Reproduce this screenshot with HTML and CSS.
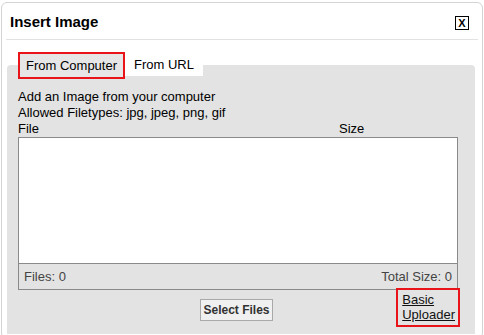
FILE: index.html
```html
<!DOCTYPE html>
<html lang="en">
<head>
  <meta charset="UTF-8" />
  <title>Insert Image</title>
  <link rel="stylesheet" href="styles.css">
</head>
<body>

  <div class="dialog">
    <div class="dialog-head">
      <span class="dialog-title">Insert Image</span>
      <button class="close-btn">X</button>
    </div>

    <div class="dialog-body">
      <div class="tabs">
        <div class="tab tab-active">From Computer</div>
        <div class="tab">From URL</div>
      </div>

      <div class="panel">
        <div class="intro">
          <div>Add an Image from your computer</div>
          <div>Allowed Filetypes: jpg, jpeg, png, gif</div>
        </div>

        <div class="list-head">
          <span class="col-file">File</span>
          <span class="col-size">Size</span>
        </div>

        <div class="file-list">
          <div class="file-rows"></div>
          <div class="file-foot">
            <span>Files: 0</span>
            <span>Total Size: 0</span>
          </div>
        </div>

        <div class="actions">
          <span></span>
          <button class="select-btn">Select Files</button>
          <a href="#" class="basic-link">Basic<br>Uploader</a>
        </div>
      </div>
    </div>
  </div>

</body>
</html>
```

FILE: styles.css
```css
* {
  box-sizing: border-box;
}

body {
  margin: 0;
  background: #fff;
  font-family: 'Liberation Sans', Arial, sans-serif;
  font-size: 13px;
  color: #000;
}

.dialog {
  width: 482px;
  margin: 2px 0 0 1px;
  background: #fff;
  border: 1px solid #d4d4d4;
  border-radius: 6px;
}

.dialog-head {
  display: flex;
  align-items: center;
  justify-content: space-between;
  height: 37px;
  margin: 0 4px;
  padding: 0 9px 0 4px;
  border-bottom: 1px solid #e2e2e2;
}

.dialog-title {
  font-size: 15px;
  font-weight: bold;
}

.close-btn {
  width: 14px;
  height: 14px;
  margin-top: 3px;
  padding: 0;
  border: 1px solid #000;
  background: #fff;
  font-family: 'Liberation Sans', Arial, sans-serif;
  font-size: 11px;
  font-weight: bold;
  line-height: 12px;
  color: #000;
}

.dialog-body {
  padding: 12px 7px 4px 5px;
}

.tabs {
  display: flex;
  align-items: flex-start;
  height: 27px;
  margin-left: 11px;
  position: relative;
  z-index: 1;
}

.tab {
  height: 24px;
  padding: 0 9px;
  background: #fff;
  line-height: 25px;
}

.tab-active {
  height: 27px;
  padding: 0 6px;
  background: #e6e6e6;
  border: 2px solid #e8141a;
  line-height: 23px;
}

.panel {
  margin-top: -14px;
  padding: 24px 17px 7px 11px;
  background: #e3e3e3;
  border-radius: 4px 4px 0 0;
}

.intro {
  line-height: 16px;
}

.list-head {
  display: flex;
  line-height: 16px;
}

.col-file {
  width: 321px;
}

.file-list {
  border: 1px solid #8a8a8a;
}

.file-rows {
  height: 126px;
  background: #fff;
  border-bottom: 1px solid #8a8a8a;
}

.file-foot {
  display: flex;
  justify-content: space-between;
  height: 25px;
  padding: 0 5px;
  line-height: 25px;
  color: #444;
}

.actions {
  display: grid;
  grid-template-columns: 1fr auto 1fr;
  align-items: start;
  padding-top: 9px;
}

.select-btn {
  height: 22px;
  padding: 0 2px;
  margin-right: 3px;
  background: #f0f0f0;
  border: 1px solid #a9a9a9;
  font-family: 'Liberation Sans', Arial, sans-serif;
  font-size: 12px;
  font-weight: bold;
  color: #333;
}

.basic-link {
  justify-self: end;
  margin-top: -11px;
  margin-right: -2px;
  padding: 2px 3px 3px 4px;
  border: 2px solid #e8141a;
  line-height: 15px;
  color: #111;
}
```
